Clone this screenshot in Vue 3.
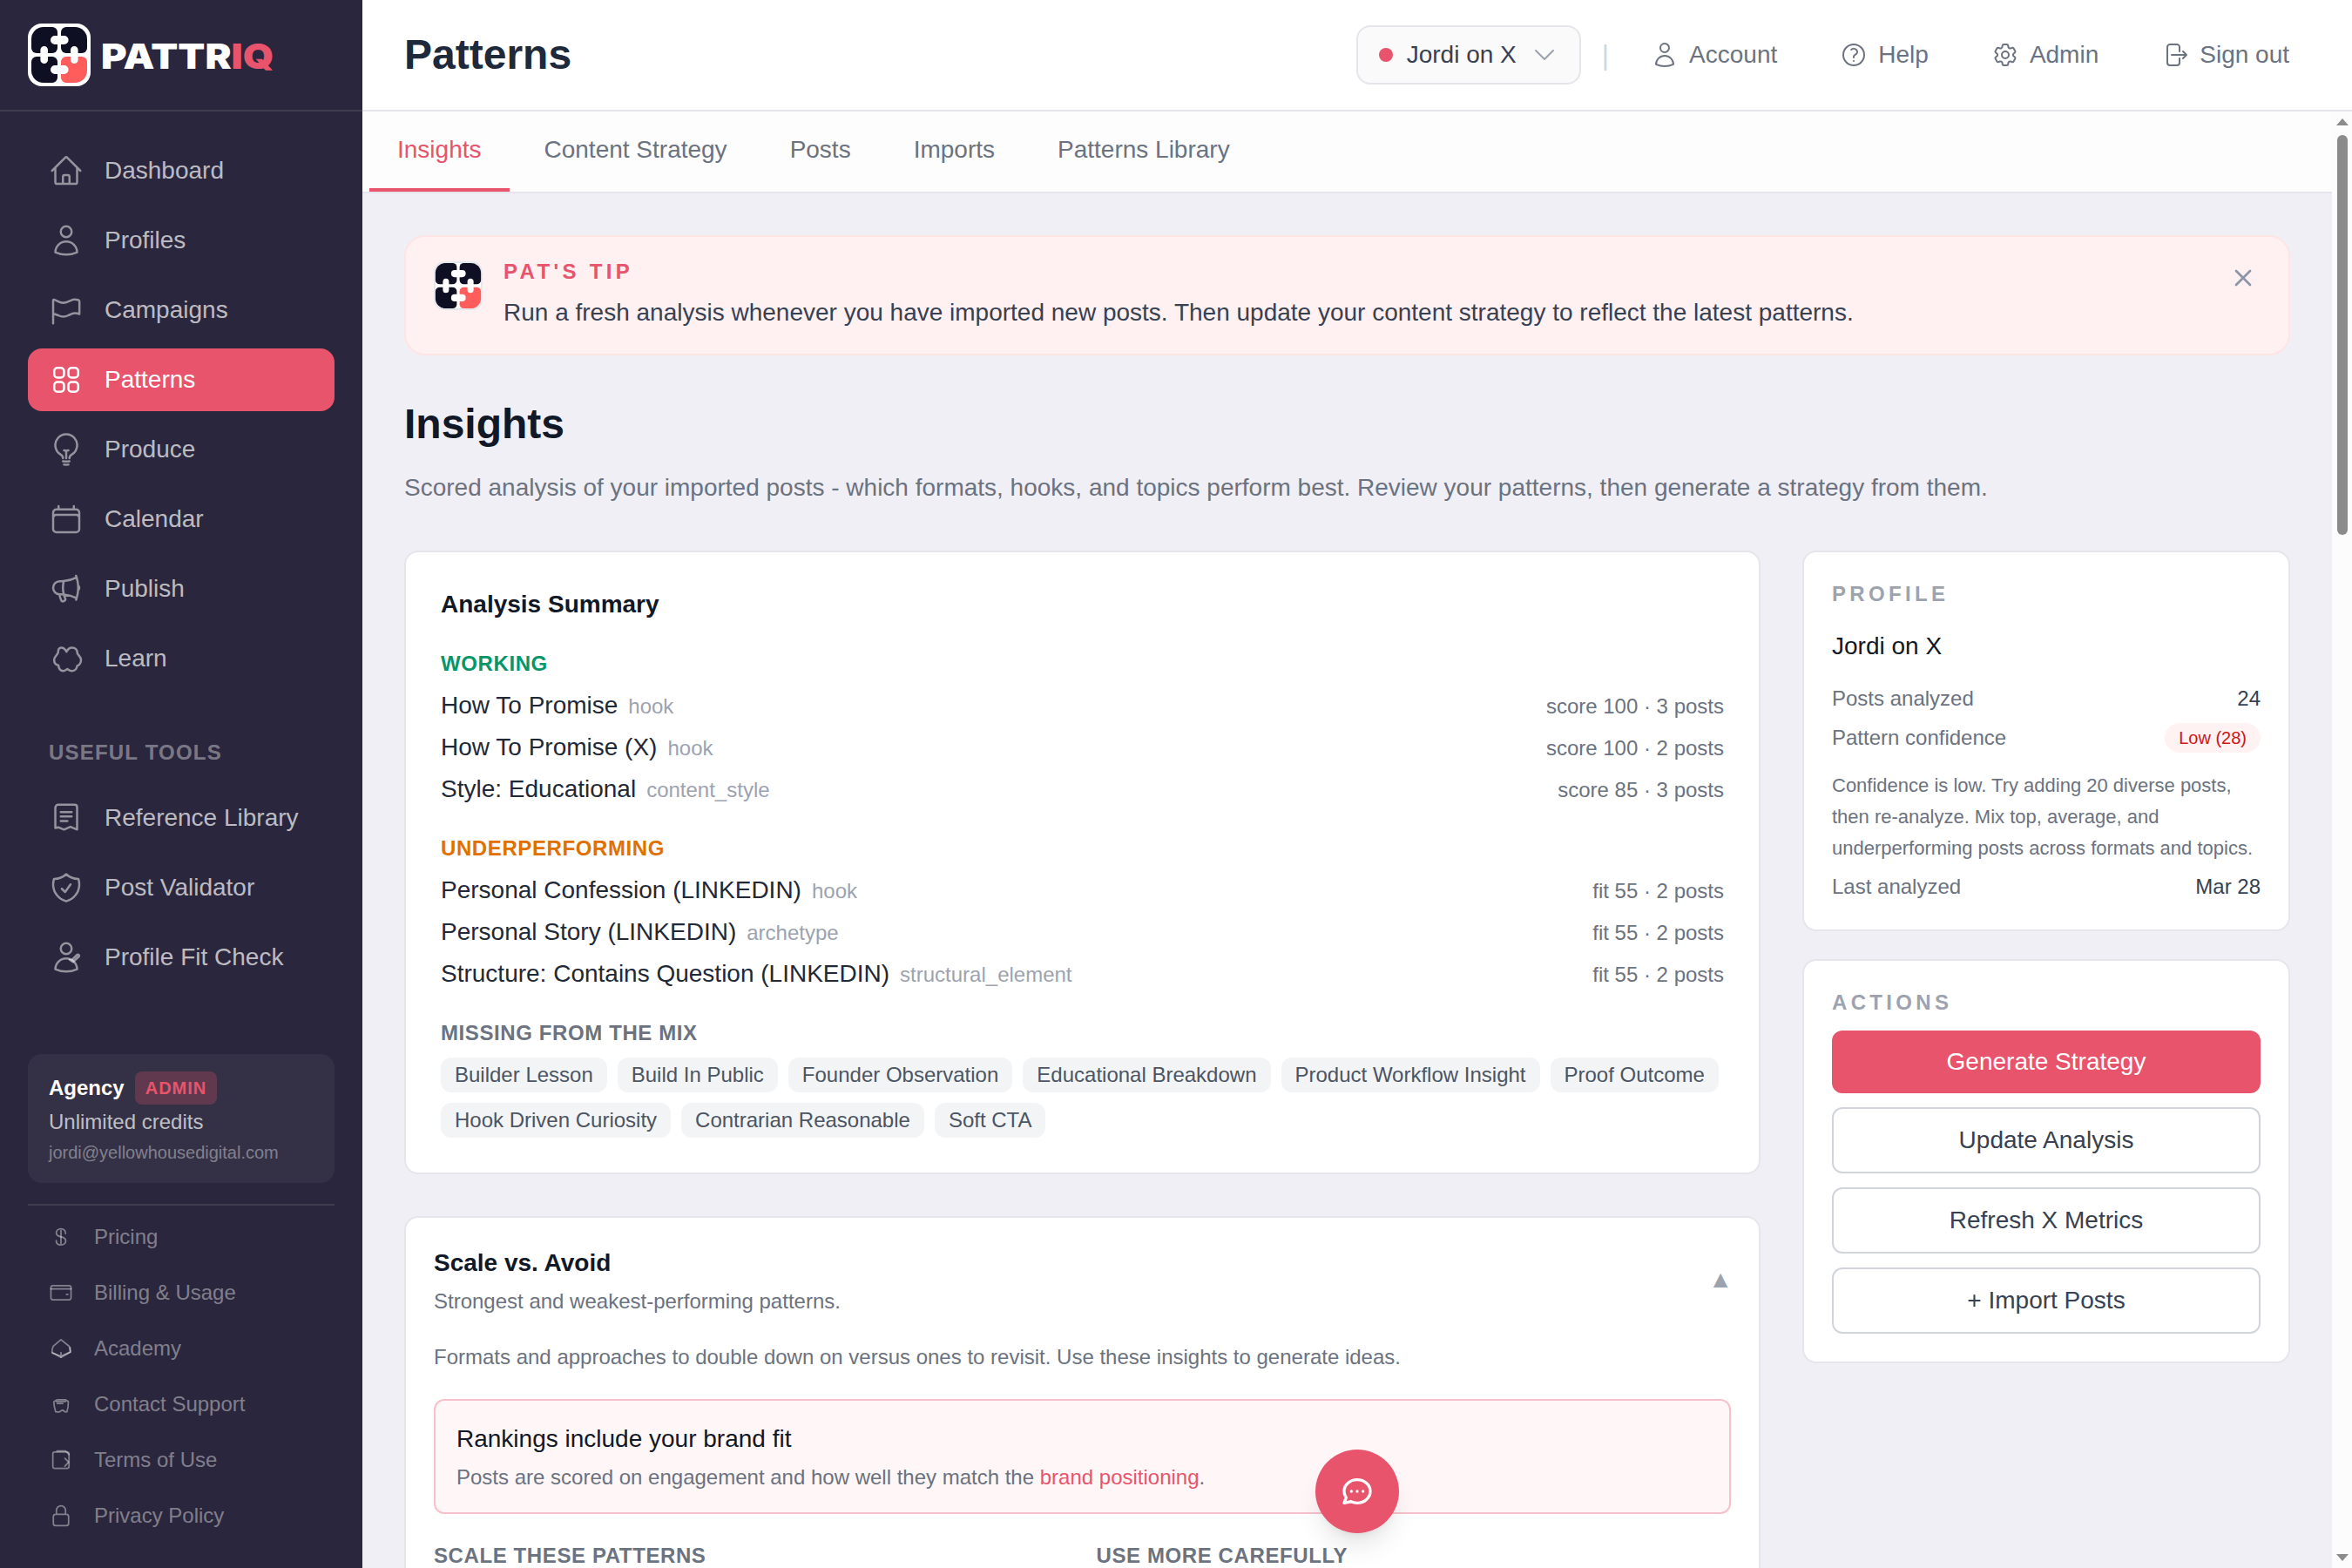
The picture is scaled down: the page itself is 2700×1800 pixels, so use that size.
<template>
  <div class="app">
    <aside class="sidebar">
      <div class="brand">
        <svg class="brand-mark" viewBox="0 0 72 72">
          <rect width="72" height="72" rx="16" fill="#fff" />
          <g fill="#0f0f23">
            <path :d="tiles.tl" />
            <path :d="tiles.tr" />
            <path :d="tiles.bl" />
          </g>
          <path :d="tiles.br" fill="#ff5c5c" />
          <path :d="tiles.knobs" fill="#fff" />
        </svg>
        <span class="brand-name">PATTR<span class="accent">IQ</span></span>
      </div>

      <nav class="nav">
        <a
          v-for="item in mainNav"
          :key="item.label"
          class="nav-item"
          :class="{ active: item.active }"
        >
          <svg class="nav-icon" viewBox="0 0 24 24">
            <path v-for="(d, i) in item.icon" :key="i" :d="d" />
          </svg>
          {{ item.label }}
        </a>
        <div class="nav-label">USEFUL TOOLS</div>
        <a v-for="item in toolNav" :key="item.label" class="nav-item">
          <svg class="nav-icon" viewBox="0 0 24 24">
            <path v-for="(d, i) in item.icon" :key="i" :d="d" />
          </svg>
          {{ item.label }}
        </a>
      </nav>

      <div class="sidebar-bottom">
        <div class="plan-card">
          <div class="plan-row">
            <strong>Agency</strong>
            <span class="admin-badge">ADMIN</span>
          </div>
          <div class="plan-credits">Unlimited credits</div>
          <div class="plan-email">jordi@yellowhousedigital.com</div>
        </div>
        <div class="footer-links">
          <a v-for="item in footerNav" :key="item.label" class="footer-link">
            <svg class="footer-icon" viewBox="0 0 24 24">
              <path v-for="(d, i) in item.icon" :key="i" :d="d" />
            </svg>
            {{ item.label }}
          </a>
        </div>
      </div>
    </aside>

    <div class="main">
      <header class="topbar">
        <h1 class="page-title">Patterns</h1>
        <div class="topbar-right">
          <button class="profile-select">
            <span class="dot"></span>
            Jordi on X
            <svg class="chevron" viewBox="0 0 24 24">
              <path d="m19.5 8.25-7.5 7.5-7.5-7.5" />
            </svg>
          </button>
          <span class="divider">|</span>
          <a v-for="link in topLinks" :key="link.label" class="top-link">
            <svg class="top-icon" viewBox="0 0 24 24">
              <path v-for="(d, i) in link.icon" :key="i" :d="d" />
            </svg>
            {{ link.label }}
          </a>
        </div>
      </header>

      <div class="scroll-area">
        <div class="pane">
          <div class="tabs">
            <a
              v-for="(tab, i) in tabs"
              :key="tab"
              class="tab"
              :class="{ active: i === 0 }"
            >{{ tab }}</a>
          </div>

          <div class="content">
            <section class="tip">
              <svg class="tip-mark" viewBox="1.7 1.7 68.6 68.6">
                <rect x="2.9" y="2.9" width="66.2" height="66.2" rx="14" fill="#fff" stroke="#e5e7eb" stroke-width="2.4" />
                <g fill="#0f0f23">
                  <path :d="tiles.tl" />
                  <path :d="tiles.tr" />
                  <path :d="tiles.bl" />
                </g>
                <path :d="tiles.br" fill="#ff5c5c" />
                <path :d="tiles.knobs" fill="#fff" />
              </svg>
              <div class="tip-body">
                <div class="tip-label">PAT'S TIP</div>
                <div class="tip-text">Run a fresh analysis whenever you have imported new posts. Then update your content strategy to reflect the latest patterns.</div>
              </div>
              <svg class="tip-close" viewBox="0 0 24 24">
                <path d="M6 18 18 6M6 6l12 12" />
              </svg>
            </section>

            <h2 class="section-title">Insights</h2>
            <p class="section-sub">Scored analysis of your imported posts - which formats, hooks, and topics perform best. Review your patterns, then generate a strategy from them.</p>

            <div class="columns">
              <div class="col-left">
                <section class="card summary">
                  <h3 class="card-title">Analysis Summary</h3>
                  <div v-for="group in groups" :key="group.label" class="group">
                    <div class="group-label" :class="group.tone">{{ group.label }}</div>
                    <div class="rows">
                      <div v-for="row in group.rows" :key="row.name" class="row">
                        <span class="row-name">{{ row.name }}</span>
                        <span class="row-tag">{{ row.tag }}</span>
                        <span class="row-meta">{{ row.meta }}</span>
                      </div>
                    </div>
                  </div>
                  <div class="group-label muted">MISSING FROM THE MIX</div>
                  <div class="chips">
                    <span v-for="chip in missing" :key="chip" class="chip">{{ chip }}</span>
                  </div>
                </section>

                <section class="card scale">
                  <div class="scale-head">
                    <div>
                      <h3 class="scale-title">Scale vs. Avoid</h3>
                      <div class="scale-sub">Strongest and weakest-performing patterns.</div>
                    </div>
                    <span class="caret">▲</span>
                  </div>
                  <p class="scale-text">Formats and approaches to double down on versus ones to revisit. Use these insights to generate ideas.</p>
                  <div class="notice">
                    <div class="notice-title">Rankings include your brand fit</div>
                    <div class="notice-text">Posts are scored on engagement and how well they match the <a class="link">brand positioning</a>.</div>
                  </div>
                  <div class="scale-cols">
                    <div class="group-label muted">SCALE THESE PATTERNS</div>
                    <div class="group-label muted">USE MORE CAREFULLY</div>
                  </div>
                </section>
              </div>

              <div class="col-right">
                <section class="card side">
                  <div class="side-label">PROFILE</div>
                  <div class="side-name">Jordi on X</div>
                  <div class="stat">
                    <span>Posts analyzed</span>
                    <span class="stat-value">24</span>
                  </div>
                  <div class="stat stat-gap">
                    <span>Pattern confidence</span>
                    <span class="pill">Low (28)</span>
                  </div>
                  <p class="side-note">Confidence is low. Try adding 20 diverse posts, then re-analyze. Mix top, average, and underperforming posts across formats and topics.</p>
                  <div class="stat stat-last">
                    <span>Last analyzed</span>
                    <span class="stat-value">Mar 28</span>
                  </div>
                </section>

                <section class="card side actions">
                  <div class="side-label">ACTIONS</div>
                  <button class="btn primary">Generate Strategy</button>
                  <button class="btn">Update Analysis</button>
                  <button class="btn">Refresh X Metrics</button>
                  <button class="btn">+ Import Posts</button>
                </section>
              </div>
            </div>
          </div>
        </div>

        <div class="scrollbar">
          <span class="arrow up"></span>
          <span class="thumb"></span>
          <span class="arrow down"></span>
        </div>
      </div>

      <button class="chat-fab">
        <svg viewBox="0 0 24 24">
          <path d="M8 12h.01M12 12h.01M16 12h.01M21 12c0 4.418-4.03 8-9 8a9.863 9.863 0 01-4.255-.949L3 20l1.395-3.72C3.512 15.042 3 13.574 3 12c0-4.418 4.03-8 9-8s9 3.582 9 8z" />
        </svg>
      </button>
    </div>
  </div>
</template>

<script setup>
// Puzzle logo pieces, 72 unit grid
const tiles = {
  tl: 'M18 4H28a6 6 0 0 1 6 6V28a6 6 0 0 1-6 6H10a6 6 0 0 1-6-6V18A14 14 0 0 1 18 4Z',
  tr: 'M44 4H54A14 14 0 0 1 68 18V28a6 6 0 0 1-6 6H44a6 6 0 0 1-6-6V10a6 6 0 0 1 6-6Z',
  bl: 'M10 38H28a6 6 0 0 1 6 6V62a6 6 0 0 1-6 6H18A14 14 0 0 1 4 54V44a6 6 0 0 1 6-6Z',
  br: 'M44 38H62a6 6 0 0 1 6 6V54A14 14 0 0 1 54 68H44a6 6 0 0 1-6-6V44a6 6 0 0 1 6-6Z',
  knobs:
    'M31 14H41.6a5 5 0 0 1 0 10H31a5 5 0 0 1 0-10Z' +
    'M31 48H41.6a5 5 0 0 1 0 10H31a5 5 0 0 1 0-10Z' +
    'M14.4 30.3a4.3 4.3 0 0 1 8.6 0V41.7a4.3 4.3 0 0 1-8.6 0Z' +
    'M49 30.3a4.3 4.3 0 0 1 8.6 0V41.7a4.3 4.3 0 0 1-8.6 0Z'
}

const userIcon =
  'M15.75 6a3.75 3.75 0 1 1-7.5 0 3.75 3.75 0 0 1 7.5 0ZM4.501 20.118a7.5 7.5 0 0 1 14.998 0A17.933 17.933 0 0 1 12 21.75c-2.676 0-5.216-.584-7.499-1.632Z'

const mainNav = [
  {
    label: 'Dashboard',
    icon: ['m2.25 12 8.954-8.955c.44-.439 1.152-.439 1.591 0L21.75 12M4.5 9.75v10.125c0 .621.504 1.125 1.125 1.125H9.75v-4.875c0-.621.504-1.125 1.125-1.125h2.25c.621 0 1.125.504 1.125 1.125V21h4.125c.621 0 1.125-.504 1.125-1.125V9.75M8.25 21h8.25']
  },
  { label: 'Profiles', icon: [userIcon] },
  {
    label: 'Campaigns',
    icon: ['M3 21.2V5.4c0-.5.4-.8.9-.6l2.6 1.3c2.2 1.1 4.8 1.1 7 0l1.8-.8c1.6-.8 3.5-.8 5.2-.2.4.2.6.4.6.8v8.8c-1.9-.8-4-.8-5.8.1l-1.8.8c-2.2 1.1-4.8 1.1-7 0L3 14.4']
  },
  {
    label: 'Patterns',
    active: true,
    icon: ['M3.75 6A2.25 2.25 0 0 1 6 3.75h2.25A2.25 2.25 0 0 1 10.5 6v2.25a2.25 2.25 0 0 1-2.25 2.25H6a2.25 2.25 0 0 1-2.25-2.25V6ZM3.75 15.75A2.25 2.25 0 0 1 6 13.5h2.25a2.25 2.25 0 0 1 2.25 2.25V18a2.25 2.25 0 0 1-2.25 2.25H6A2.25 2.25 0 0 1 3.75 18v-2.25ZM13.5 6a2.25 2.25 0 0 1 2.25-2.25H18A2.25 2.25 0 0 1 20.25 6v2.25A2.25 2.25 0 0 1 18 10.5h-2.25a2.25 2.25 0 0 1-2.25-2.25V6ZM13.5 15.75a2.25 2.25 0 0 1 2.25-2.25H18a2.25 2.25 0 0 1 2.25 2.25V18A2.25 2.25 0 0 1 18 20.25h-2.25A2.25 2.25 0 0 1 13.5 18v-2.25Z']
  },
  {
    label: 'Produce',
    icon: ['M12 18v-5.25m0 0a6.01 6.01 0 0 0 1.5-.189m-1.5.189a6.01 6.01 0 0 1-1.5-.189m3.75 7.478a12.06 12.06 0 0 1-4.5 0m3.75 2.383a14.406 14.406 0 0 1-3 0M14.25 18v-.192c0-.983.658-1.823 1.508-2.316a7.5 7.5 0 1 0-7.517 0c.85.493 1.509 1.333 1.509 2.316V18']
  },
  {
    label: 'Calendar',
    icon: ['M6.75 3v2.25M17.25 3v2.25M3 18.75V7.5a2.25 2.25 0 0 1 2.25-2.25h13.5A2.25 2.25 0 0 1 21 7.5v11.25m-18 0A2.25 2.25 0 0 0 5.25 21h13.5A2.25 2.25 0 0 0 21 18.75m-18 0v-7.5A2.25 2.25 0 0 1 5.25 9h13.5A2.25 2.25 0 0 1 21 11.25v7.5']
  },
  {
    label: 'Publish',
    icon: ['M10.34 15.84c-.688-.06-1.386-.09-2.09-.09H7.5a4.5 4.5 0 1 1 0-9h.75c.704 0 1.402-.03 2.09-.09m0 9.18c.253.962.584 1.892.985 2.783.247.55.06 1.21-.463 1.511l-.657.38c-.551.318-1.26.117-1.527-.461a20.845 20.845 0 0 1-1.44-4.282m3.102.069a18.03 18.03 0 0 1-.59-4.59c0-1.586.205-3.124.59-4.59m0 9.18a23.848 23.848 0 0 1 8.835 2.535M10.34 6.66a23.847 23.847 0 0 0 8.835-2.535m0 0A23.74 23.74 0 0 0 18.795 3m.38 1.125a23.91 23.91 0 0 1 1.014 5.395m-1.014 8.855c-.118.38-.245.754-.38 1.125m.38-1.125a23.91 23.91 0 0 0 1.014-5.395m0-3.46c.495.413.811 1.035.811 1.73 0 .695-.316 1.317-.811 1.73m0-3.46a24.347 24.347 0 0 1 0 3.46']
  },
  {
    label: 'Learn',
    icon: ['M12.2 7.3C11.2 5.4 10 4.5 8.6 4.5 7 4.5 6.4 5.9 6.4 7.9 5.8 9.6 3.7 10.8 3.7 13c0 2 1.2 3.3 3 3.7.1 2.4 1.4 3.7 3.3 3.8 1.1.1 2-.7 2.8-1.3.9.8 1.9 1.4 3.2 1.3 2.1-.1 3.3-1.4 3.5-3.4 1.7-.7 2.7-2 2.7-4.1 0-2.2-1.8-3.1-2.5-4.500C19.7 5.9 18.3 4.500 16 4.500c-1.800 0-2.900 1-3.800 2.800Z']
  }
]

const toolNav = [
  {
    label: 'Reference Library',
    icon: ['M4.5 18.6V5c0-1.2.9-2.1 2.1-2.1h11.2c1 0 1.7.7 1.7 1.7V20l-4.6-1.9-4.400 1.900-4-1.600-2 .5', 'M8.25 8h7.5M8.25 11h7.5M8.25 14.1h4.6']
  },
  {
    label: 'Post Validator',
    icon: ['M9 12.75 11.25 15 15 9.75m-3-7.036A11.959 11.959 0 0 1 3.598 6 11.99 11.99 0 0 0 3 9.749c0 5.592 3.824 10.29 9 11.623 5.176-1.332 9-6.03 9-11.622 0-1.31-.21-2.571-.598-3.751h-.152c-3.196 0-6.1-1.248-8.25-3.285Z']
  },
  {
    label: 'Profile Fit Check',
    icon: [userIcon, 'M14.4 13.6l2.3 1.6 4.1-3.8c.5-.9-.5-1.7-1.2-1.2l-3.4 3.3']
  }
]

const footerNav = [
  {
    label: 'Pricing',
    icon: ['M12 5.6v12.6', 'M16.5 8.6C16.5 5.6 14.5 3.9 12 3.9S7.4 5.6 7.4 8c0 2.5 2 3.4 4.6 3.9s4.7 1.3 4.7 4c0 2.4-2.1 3.9-4.7 3.9s-4.7-1.5-4.7-4.2']
  },
  {
    label: 'Billing & Usage',
    icon: ['M4 5.1h16c1.1 0 1.9.8 1.9 1.9v10c0 1.1-.8 1.9-1.9 1.9H4c-1.1 0-1.9-.8-1.9-1.9V7c0-1.1.8-1.9 1.9-1.9Z', 'M2.1 8.2h19.8M17.4 13.7h1.4']
  },
  {
    label: 'Academy',
    icon: ['M12 3.3 4.4 9.7c-.9 1.9-1.2 3.9-1.2 6.1L12 20.7l9.6-5.2-1.5-5.6L12 3.3Z', 'M3.4 16.4 12 19.6l9-4.1v-4.5M12 16v4.5']
  },
  {
    label: 'Contact Support',
    icon: ['M8 7.6h8.2l3 1.7c.2 3-.3 6.7-1.4 10.2-1.6.4-2.6-.1-3.8-1.6-1.2 0-1.4 0-2.7 1.1-1.3.9-2.8.8-4.5.5-.9-3-1.7-6.4-1.9-9.9L8 7.6Z', 'M7.5 9.3h9M8.2 11.2h5.6']
  },
  {
    label: 'Terms of Use',
    icon: ['M5.6 4.1h12.5c1.1 0 1.8.7 1.8 1.8v12.6c0 1-.7 1.7-1.7 1.7H5.7c-1 0-1.7-.7-1.7-1.7V5.8c0-1 .6-1.7 1.6-1.7Z', 'M8 3.2h8.5l3.3 3.3M15.9 10.4l3.6 3.7-3.6 4']
  },
  {
    label: 'Privacy Policy',
    icon: ['M16.5 10.5V6.75a4.5 4.5 0 1 0-9 0v3.75m-.75 11.25h10.5a2.25 2.25 0 0 0 2.25-2.25v-6.75a2.25 2.25 0 0 0-2.25-2.25H6.75a2.25 2.25 0 0 0-2.25 2.25v6.75a2.25 2.25 0 0 0 2.25 2.25Z']
  }
]

const topLinks = [
  { label: 'Account', icon: [userIcon] },
  {
    label: 'Help',
    icon: ['M9.879 7.519c1.171-1.025 3.071-1.025 4.242 0 1.172 1.025 1.172 2.687 0 3.712-.203.179-.43.326-.67.442-.745.361-1.45.999-1.45 1.827v.75M21 12a9 9 0 1 1-18 0 9 9 0 0 1 18 0Zm-9 5.25h.008v.008H12v-.008Z']
  },
  {
    label: 'Admin',
    icon: [
      'M9.594 3.94c.09-.542.56-.94 1.11-.94h2.593c.55 0 1.02.398 1.11.94l.213 1.281c.063.374.313.686.645.87.074.04.147.083.22.127.325.196.72.257 1.075.124l1.217-.456a1.125 1.125 0 0 1 1.37.49l1.296 2.247a1.125 1.125 0 0 1-.26 1.431l-1.003.827c-.293.241-.438.613-.43.992a7.723 7.723 0 0 1 0 .255c-.008.378.137.75.43.991l1.004.827c.424.35.534.955.26 1.43l-1.298 2.247a1.125 1.125 0 0 1-1.369.491l-1.217-.456c-.355-.133-.75-.072-1.076.124a6.47 6.47 0 0 1-.22.128c-.331.183-.581.495-.644.869l-.213 1.281c-.09.543-.56.94-1.11.94h-2.594c-.55 0-1.019-.398-1.11-.94l-.213-1.281c-.062-.374-.312-.686-.644-.87a6.52 6.52 0 0 1-.22-.127c-.325-.196-.72-.257-1.076-.124l-1.217.456a1.125 1.125 0 0 1-1.369-.49l-1.297-2.247a1.125 1.125 0 0 1 .26-1.431l1.004-.827c.292-.24.437-.613.43-.991a6.932 6.932 0 0 1 0-.255c.007-.38-.138-.751-.43-.992l-1.004-.827a1.125 1.125 0 0 1-.26-1.43l1.297-2.247a1.125 1.125 0 0 1 1.37-.491l1.216.456c.356.133.751.072 1.076-.124.072-.044.146-.086.22-.128.332-.183.582-.495.644-.869l.214-1.28Z',
      'M15 12a3 3 0 1 1-6 0 3 3 0 0 1 6 0Z'
    ]
  },
  {
    label: 'Sign out',
    icon: ['M15.75 9V5.25A2.25 2.25 0 0 0 13.5 3h-6a2.25 2.25 0 0 0-2.25 2.25v13.5A2.25 2.25 0 0 0 7.5 21h6a2.25 2.25 0 0 0 2.25-2.25V15m3 0 3-3m0 0-3-3m3 3H9']
  }
]

const tabs = ['Insights', 'Content Strategy', 'Posts', 'Imports', 'Patterns Library']

const groups = [
  {
    label: 'WORKING',
    tone: 'good',
    rows: [
      { name: 'How To Promise', tag: 'hook', meta: 'score 100 · 3 posts' },
      { name: 'How To Promise (X)', tag: 'hook', meta: 'score 100 · 2 posts' },
      { name: 'Style: Educational', tag: 'content_style', meta: 'score 85 · 3 posts' }
    ]
  },
  {
    label: 'UNDERPERFORMING',
    tone: 'warn',
    rows: [
      { name: 'Personal Confession (LINKEDIN)', tag: 'hook', meta: 'fit 55 · 2 posts' },
      { name: 'Personal Story (LINKEDIN)', tag: 'archetype', meta: 'fit 55 · 2 posts' },
      { name: 'Structure: Contains Question (LINKEDIN)', tag: 'structural_element', meta: 'fit 55 · 2 posts' }
    ]
  }
]

const missing = [
  'Builder Lesson',
  'Build In Public',
  'Founder Observation',
  'Educational Breakdown',
  'Product Workflow Insight',
  'Proof Outcome',
  'Hook Driven Curiosity',
  'Contrarian Reasonable',
  'Soft CTA'
]
</script>

<style>
body {
  margin: 0;
  overflow: hidden;
}
</style>

<style scoped>
* {
  box-sizing: border-box;
}

.app {
  display: flex;
  height: 100vh;
  overflow: hidden;
  font-family: "Liberation Sans", Arial, sans-serif;
  font-size: 28px;
  color: #111827;
  background: #f0eff5;
}

h1, h2, h3, p {
  margin: 0;
}

button {
  font: inherit;
}

svg {
  flex-shrink: 0;
}

/* sidebar */
.sidebar {
  display: flex;
  flex-direction: column;
  width: 416px;
  flex-shrink: 0;
  background: #2a263d;
}

.brand {
  display: flex;
  align-items: center;
  gap: 12px;
  height: 128px;
  padding: 0 32px;
  border-bottom: 2px solid rgba(255, 255, 255, 0.1);
}

.brand-mark {
  width: 72px;
  height: 72px;
}

.brand-name {
  padding-top: 3px;
  font-family: Inter, "Liberation Sans", sans-serif;
  font-weight: 900;
  font-size: 40px;
  line-height: 48px;
  color: #fff;
  transform: scaleX(1.13);
  transform-origin: left center;
}

.accent {
  color: #e8546b;
}

.nav {
  display: flex;
  flex-direction: column;
  gap: 8px;
  padding: 32px 32px 0;
}

.nav-item {
  display: flex;
  align-items: center;
  gap: 24px;
  height: 72px;
  padding: 0 24px;
  border-radius: 16px;
  color: rgba(255, 255, 255, 0.7);
}

.nav-item.active {
  background: #e8546b;
  color: #fff;
}

.nav-icon {
  width: 40px;
  height: 40px;
  fill: none;
  stroke: rgba(255, 255, 255, 0.5);
  stroke-width: 1.5;
  stroke-linecap: round;
  stroke-linejoin: round;
}

.active .nav-icon {
  stroke: #fff;
}

.nav-label {
  margin: 46px 0 13px;
  padding-left: 24px;
  font-size: 24px;
  font-weight: 700;
  line-height: 36px;
  letter-spacing: 0.05em;
  color: rgba(255, 255, 255, 0.4);
}

.sidebar-bottom {
  margin-top: auto;
  padding: 0 32px 28px;
}

.plan-card {
  height: 148px;
  padding: 20px 24px;
  border-radius: 16px;
  background: rgba(255, 255, 255, 0.05);
}

.plan-row {
  display: flex;
  align-items: center;
  gap: 12px;
  font-size: 24px;
  color: #fff;
}

.admin-badge {
  padding: 4px 12px;
  border-radius: 8px;
  background: rgba(232, 84, 107, 0.25);
  color: #e8546b;
  font-size: 20px;
  font-weight: 700;
  line-height: 30px;
  letter-spacing: 0.05em;
}

.plan-credits {
  margin-top: 2px;
  font-size: 24px;
  line-height: 36px;
  color: rgba(255, 255, 255, 0.7);
}

.plan-email {
  margin-top: 2px;
  font-size: 20px;
  line-height: 30px;
  color: rgba(255, 255, 255, 0.4);
}

.footer-links {
  margin-top: 24px;
  padding-top: 4px;
  border-top: 2px solid rgba(255, 255, 255, 0.1);
}

.footer-link {
  display: flex;
  align-items: center;
  gap: 24px;
  height: 64px;
  padding: 0 24px;
  font-size: 24px;
  color: rgba(255, 255, 255, 0.42);
}

.footer-icon {
  width: 28px;
  height: 28px;
  fill: none;
  stroke: currentColor;
  stroke-width: 1.5;
  stroke-linecap: round;
  stroke-linejoin: round;
}

/* top bar */
.main {
  position: relative;
  display: flex;
  flex-direction: column;
  flex: 1;
  min-width: 0;
}

.topbar {
  display: flex;
  align-items: center;
  justify-content: space-between;
  height: 128px;
  flex-shrink: 0;
  padding: 0 48px;
  background: #fff;
  border-bottom: 2px solid #e5e5eb;
}

.page-title {
  font-size: 48px;
  line-height: 64px;
  color: #1e293b;
}

.topbar-right {
  display: flex;
  align-items: center;
  gap: 24px;
}

.profile-select {
  display: flex;
  align-items: center;
  gap: 16px;
  height: 68px;
  padding: 0 24px;
  border: 2px solid #e5e5eb;
  border-radius: 16px;
  background: #fafafa;
  color: #374151;
}

.dot {
  width: 16px;
  height: 16px;
  border-radius: 50%;
  background: #e8546b;
}

.chevron {
  width: 32px;
  height: 32px;
  fill: none;
  stroke: #9ca3af;
  stroke-width: 1.5;
  stroke-linecap: round;
  stroke-linejoin: round;
}

.divider {
  font-size: 32px;
  color: #d1d5db;
}

.top-link {
  display: flex;
  align-items: center;
  gap: 12px;
  padding: 0 24px;
  color: #6b7280;
}

.top-icon {
  width: 32px;
  height: 32px;
  fill: none;
  stroke: currentColor;
  stroke-width: 1.5;
  stroke-linecap: round;
  stroke-linejoin: round;
}

/* scroll region */
.scroll-area {
  display: flex;
  flex: 1;
  min-height: 0;
}

.pane {
  flex: 1;
  min-width: 0;
  overflow: hidden;
}

.scrollbar {
  display: flex;
  flex-direction: column;
  align-items: center;
  width: 23px;
  padding: 8px 0;
  background: #fcfcfc;
}

.arrow {
  border: 7px solid transparent;
}

.arrow.up {
  border-top: 0;
  border-bottom: 8px solid #8b8b8b;
}

.arrow.down {
  margin-top: auto;
  border-bottom: 0;
  border-top: 8px solid #8b8b8b;
}

.thumb {
  width: 12px;
  height: 459px;
  margin-top: 11px;
  border-radius: 6px;
  background: #8b8b8b;
}

.tabs {
  display: flex;
  gap: 8px;
  height: 94px;
  padding-left: 8px;
  background: #fdfdfe;
  border-bottom: 2px solid #e5e5eb;
}

.tab {
  padding: 0 32px;
  line-height: 87px;
  color: #6b7280;
  border-bottom: 4px solid transparent;
}

.tab.active {
  color: #e8546b;
  border-bottom-color: #e8546b;
}

.content {
  padding: 48px;
}

/* tip */
.tip {
  display: flex;
  align-items: flex-start;
  height: 138px;
  padding: 24px 32px;
  border: 2px solid #ffe4e4;
  border-radius: 24px;
  background: #fff0f1;
}

.tip-mark {
  width: 56px;
  height: 56px;
  margin: 4px 24px 0 0;
}

.tip-body {
  flex: 1;
}

.tip-label {
  font-size: 24px;
  font-weight: 700;
  line-height: 32px;
  letter-spacing: 0.18em;
  color: #e8546b;
}

.tip-text {
  margin-top: 8px;
  line-height: 46px;
  color: #374151;
}

.tip-close {
  width: 32px;
  height: 32px;
  margin: 7px 4px 0 0;
  fill: none;
  stroke: #8b95a5;
  stroke-width: 2;
  stroke-linecap: round;
}

.section-title {
  margin-top: 46px;
  font-size: 48px;
  line-height: 66px;
}

.section-sub {
  margin-top: 19px;
  line-height: 42px;
  color: #6b7280;
}

.columns {
  display: flex;
  align-items: flex-start;
  gap: 48px;
  margin-top: 51px;
}

.col-left {
  display: flex;
  flex-direction: column;
  flex: 1;
  min-width: 0;
  gap: 48px;
}

.col-right {
  display: flex;
  flex-direction: column;
  width: 560px;
  flex-shrink: 0;
  gap: 32px;
}

.card {
  border: 2px solid #e5e5eb;
  border-radius: 16px;
  background: #fff;
}

/* summary */
.summary {
  padding: 40px;
}

.card-title {
  margin-bottom: 30px;
  font-size: 28px;
  line-height: 40px;
}

.group {
  margin-bottom: 26px;
}

.group-label {
  font-size: 24px;
  font-weight: 700;
  line-height: 36px;
  letter-spacing: 0.025em;
}

.good {
  color: #059669;
}

.warn {
  color: #e07000;
}

.muted {
  color: #6b7280;
}

.rows {
  margin-top: 6px;
}

.row {
  display: flex;
  align-items: baseline;
  gap: 12px;
  height: 48px;
  line-height: 48px;
}

.row-name {
  color: #1f2937;
}

.row-tag {
  font-size: 24px;
  color: #9ca3af;
}

.row-meta {
  margin-left: auto;
  font-size: 24px;
  color: #6b7280;
}

.chips {
  display: flex;
  flex-wrap: wrap;
  gap: 12px;
  margin-top: 10px;
}

.chip {
  padding: 0 16px;
  border-radius: 12px;
  background: #f3f4f6;
  font-size: 24px;
  line-height: 40px;
  color: #4b5563;
}

/* scale vs avoid */
.scale {
  height: 600px;
  padding: 32px;
}

.scale-head {
  display: flex;
  align-items: center;
  justify-content: space-between;
}

.scale-title {
  font-size: 28px;
  line-height: 40px;
}

.scale-sub {
  margin-top: 6px;
  font-size: 24px;
  line-height: 36px;
  color: #6b7280;
}

.caret {
  margin: 0 -2px 4px 0;
  font-size: 28px;
  line-height: 32px;
  color: #9ca3af;
}

.scale-text {
  margin-top: 28px;
  font-size: 24px;
  line-height: 36px;
  color: #6b7280;
}

.notice {
  height: 132px;
  margin-top: 30px;
  padding: 24px;
  border: 2px solid #f6c1ca;
  border-radius: 12px;
  background: #fef6f7;
}

.notice-title {
  line-height: 40px;
}

.notice-text {
  margin-top: 6px;
  font-size: 24px;
  line-height: 36px;
  color: #6b7280;
}

.link {
  color: #e8546b;
}

.scale-cols {
  display: grid;
  grid-template-columns: 1fr 1fr;
  gap: 32px;
  margin-top: 30px;
}

/* right column */
.side {
  padding: 32px;
}

.side-label {
  font-size: 24px;
  font-weight: 700;
  line-height: 32px;
  letter-spacing: 0.18em;
  color: #9ca3af;
}

.side-name {
  margin: 24px 0 22px;
  line-height: 40px;
}

.stat {
  display: flex;
  align-items: center;
  justify-content: space-between;
  height: 36px;
  font-size: 24px;
  color: #6b7280;
}

.stat-gap {
  margin-top: 9px;
}

.stat-last {
  height: 34px;
}

.stat-value {
  color: #374151;
}

.pill {
  padding: 0 16px;
  border-radius: 17px;
  background: #fef2f2;
  font-size: 20px;
  line-height: 34px;
  color: #cf1515;
}

.side-note {
  margin: 19px 0 9.75px;
  font-size: 22px;
  line-height: 35.75px;
  color: #6b7280;
}

.actions {
  display: flex;
  flex-direction: column;
  gap: 16px;
}

.btn {
  height: 76px;
  padding: 0;
  border: 2px solid #d1d5db;
  border-radius: 12px;
  background: #fff;
  color: #374151;
}

.btn.primary {
  height: 72px;
  border: 0;
  background: #e8546b;
  color: #fff;
}

/* floating chat button */
.chat-fab {
  position: absolute;
  left: 50%;
  bottom: 40px;
  display: flex;
  align-items: center;
  justify-content: center;
  width: 96px;
  height: 96px;
  margin-left: -48px;
  padding: 0;
  border: 0;
  border-radius: 50%;
  background: #e8546b;
  box-shadow: 0 20px 30px -6px rgba(0, 0, 0, 0.1), 0 8px 12px -8px rgba(0, 0, 0, 0.1);
}

.chat-fab svg {
  width: 40px;
  height: 40px;
  fill: none;
  stroke: #fff;
  stroke-width: 2;
  stroke-linecap: round;
  stroke-linejoin: round;
}
</style>
